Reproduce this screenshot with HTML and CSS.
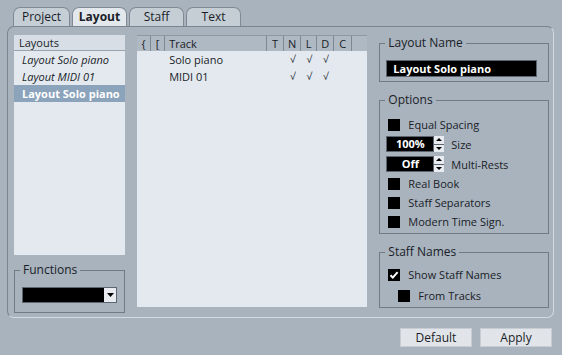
FILE: index.html
```html
<!DOCTYPE html>
<html>
<head>
  <link rel="stylesheet" href="styles.css">
</head>
<body>
  <div class="tabs">
    <div class="tab">Project</div>
    <div class="tab active">Layout</div>
    <div class="tab">Staff</div>
    <div class="tab">Text</div>
  </div>

  <div class="panel">
    <div class="col-left">
      <div class="list">
        <div class="list-head">Layouts</div>
        <div class="list-item italic">Layout Solo piano</div>
        <div class="list-item italic">Layout MIDI 01</div>
        <div class="list-item selected">Layout Solo piano</div>
      </div>
      <fieldset class="group functions">
        <legend>Functions</legend>
        <div class="dropdown">
          <span class="drop-btn">
            <svg width="7" height="5" viewBox="0 0 7 5"><path d="M0 0h7L3.5 4z" fill="#000"/></svg>
          </span>
        </div>
      </fieldset>
    </div>

    <div class="tracks">
      <div class="track-head">
        <div class="th c-brace">{</div>
        <div class="th c-bracket">[</div>
        <div class="th c-name">Track</div>
        <div class="th c-t">T</div>
        <div class="th c-n">N</div>
        <div class="th c-l">L</div>
        <div class="th c-d">D</div>
        <div class="th c-c">C</div>
        <div class="th c-fill"></div>
      </div>
      <div class="track-row">
        <div class="td c-brace"></div>
        <div class="td c-bracket"></div>
        <div class="td c-name">Solo piano</div>
        <div class="td c-t"></div>
        <div class="td c-n">√</div>
        <div class="td c-l">√</div>
        <div class="td c-d">√</div>
      </div>
      <div class="track-row">
        <div class="td c-brace"></div>
        <div class="td c-bracket"></div>
        <div class="td c-name">MIDI 01</div>
        <div class="td c-t"></div>
        <div class="td c-n">√</div>
        <div class="td c-l">√</div>
        <div class="td c-d">√</div>
      </div>
    </div>

    <div class="col-right">
      <fieldset class="group name-group">
        <legend>Layout Name</legend>
        <div class="name-field">Layout Solo piano</div>
      </fieldset>

      <fieldset class="group options">
        <legend>Options</legend>
        <div class="opt-row"><span class="box"></span>Equal Spacing</div>
        <div class="opt-row spin-row">
          <div class="spin"><span class="spin-val">100%</span><span class="spin-btns"><span class="up"></span><span class="down"></span></span></div>
          Size
        </div>
        <div class="opt-row spin-row">
          <div class="spin"><span class="spin-val">Off</span><span class="spin-btns"><span class="up"></span><span class="down"></span></span></div>
          Multi-Rests
        </div>
        <div class="opt-row"><span class="box"></span>Real Book</div>
        <div class="opt-row"><span class="box"></span>Staff Separators</div>
        <div class="opt-row"><span class="box"></span>Modern Time Sign.</div>
      </fieldset>

      <fieldset class="group staff-names">
        <legend>Staff Names</legend>
        <div class="opt-row">
          <span class="box">
            <svg width="12" height="12" viewBox="0 0 12 12"><path d="M2.5 6.2l2.3 2.4 4.8-5.4" fill="none" stroke="#fff" stroke-width="2"/></svg>
          </span>Show Staff Names
        </div>
        <div class="opt-row sub"><span class="box"></span>From Tracks</div>
      </fieldset>
    </div>
  </div>

  <div class="footer">
    <button class="btn">Default</button>
    <button class="btn">Apply</button>
  </div>
</body>
</html>
```

FILE: styles.css
```css
body {
  margin: 0;
  background: #a8b3be;
  font-family: 'Open Sans', 'Noto Sans', Arial, sans-serif;
  font-size: 11px;
  color: #1a1d27;
  width: 562px;
  height: 355px;
  overflow: hidden;
}
.tabs {
  display: flex;
  gap: 2px;
  padding: 7px 0 0 13px;
  height: 19px;
}
.tab {
  width: 55px;
  box-sizing: border-box;
  border: 1px solid #7f8a95;
  border-bottom: none;
  border-radius: 7px 7px 0 0;
  background: #c6ced5;
  text-align: center;
  line-height: 18px;
  font-size: 12px;
}
.tab:first-child {
  width: 57px;
}
.tab.active {
  background: #e3e8ed;
  font-weight: bold;
}
.panel {
  margin-left: 7px;
  width: 547px;
  height: 292px;
  box-sizing: border-box;
  border: 1px solid #d3d9df;
  border-top-color: #7a8590;
  border-left-color: #7a8590;
  border-radius: 7px;
  padding: 8px 4px 0 6px;
  display: flex;
  gap: 12px;
}
.col-left {
  width: 112px;
  display: flex;
  flex-direction: column;
}
.list {
  height: 220px;
  background: #e3e9ef;
}
.list-head {
  height: 15px;
  line-height: 15px;
  padding-left: 5px;
  background: #d7dee5;
  border-bottom: 1px solid #98a3ae;
}
.list-item {
  height: 17px;
  line-height: 17px;
  padding-left: 8px;
}
.list-item.italic {
  font-style: italic;
}
.list-item.selected {
  background: #8ba3bb;
  color: #fff;
  font-weight: bold;
}
.group {
  margin: 0;
  border: 1px solid #707b86;
  padding: 0 6px;
  box-sizing: border-box;
  min-width: 0;
}
.group legend {
  padding: 0 3px;
  margin-left: -1px;
  line-height: 14px;
  font-size: 12px;
}
.functions {
  margin-top: 8px;
  height: 50px;
  padding: 10px 7px 0;
}
.functions legend {
  margin-left: -2px;
}
.dropdown {
  height: 16px;
  background: #000;
  border: 1px solid #5d6670;
  box-sizing: border-box;
  display: flex;
  justify-content: flex-end;
}
.drop-btn {
  width: 12px;
  background: #e8ecf0;
  display: flex;
  align-items: center;
  justify-content: center;
}
.tracks {
  width: 232px;
  height: 272px;
  background: #e3e9ef;
}
.track-head {
  display: flex;
  height: 16px;
  background: #afb9c3;
  border-top: 1px solid #8e98a3;
  box-sizing: border-box;
}
.th {
  border-right: 1px solid #7d8893;
  line-height: 15px;
  text-align: center;
  box-sizing: border-box;
}
.track-head .c-fill {
  border-right: none;
  flex: 1;
}
.track-row {
  display: flex;
  height: 17px;
  line-height: 17px;
}
.td {
  text-align: center;
  box-sizing: border-box;
}
.c-brace { width: 14px; }
.c-bracket { width: 14px; }
.c-name { width: 102px; text-align: left; padding-left: 4px; }
.c-t { width: 17px; }
.c-n { width: 17px; }
.c-l { width: 16px; }
.c-d { width: 17px; }
.c-c { width: 18px; }
.td.c-n, .td.c-l, .td.c-d {
  font-size: 10px;
}
.col-right {
  width: 171px;
  display: flex;
  flex-direction: column;
  gap: 11px;
  padding-top: 1px;
}
.name-group {
  height: 46px;
  padding-top: 10px;
}
.name-field {
  width: 151px;
  height: 17px;
  box-sizing: border-box;
  background: #000;
  border: 1px solid #5d6670;
  color: #fff;
  font-weight: bold;
  line-height: 15px;
  padding-left: 6px;
}
.options {
  height: 141px;
  padding-top: 8px;
}
.opt-row {
  display: flex;
  align-items: center;
  height: 19px;
}
.spin-row {
  height: 20px;
}
.box {
  width: 12px;
  height: 12px;
  background: #000;
  margin: 0 8px 0 2px;
  flex: none;
  display: flex;
}
.spin {
  display: flex;
  height: 16px;
  margin-right: 7px;
}
.spin-val {
  width: 48px;
  box-sizing: border-box;
  background: #000;
  border: 1px solid #5d6670;
  color: #fff;
  font-weight: bold;
  text-align: center;
  line-height: 14px;
}
.spin-btns {
  width: 10px;
  display: flex;
  flex-direction: column;
  gap: 1px;
  background: #5d6670;
}
.spin-btns span {
  flex: 1;
  background: #e8ecf0;
  position: relative;
}
.spin-btns .up::after,
.spin-btns .down::after {
  content: "";
  position: absolute;
  left: 2px;
  border-left: 3px solid transparent;
  border-right: 3px solid transparent;
}
.spin-btns .up::after {
  top: 2px;
  border-bottom: 3px solid #000;
}
.spin-btns .down::after {
  top: 2px;
  border-top: 3px solid #000;
}
.staff-names {
  height: 63px;
  padding-top: 5px;
}
.staff-names .opt-row {
  height: 21px;
}
.opt-row.sub .box {
  margin-left: 12px;
}
.footer {
  display: flex;
  justify-content: flex-end;
  gap: 8px;
  padding: 10px 10px 0 0;
}
.btn {
  width: 72px;
  height: 19px;
  background: #e1e5ea;
  border: 1px solid #c6cdd4;
  font-family: inherit;
  font-size: 12px;
  color: #1a1d27;
  padding: 0;
}
```
